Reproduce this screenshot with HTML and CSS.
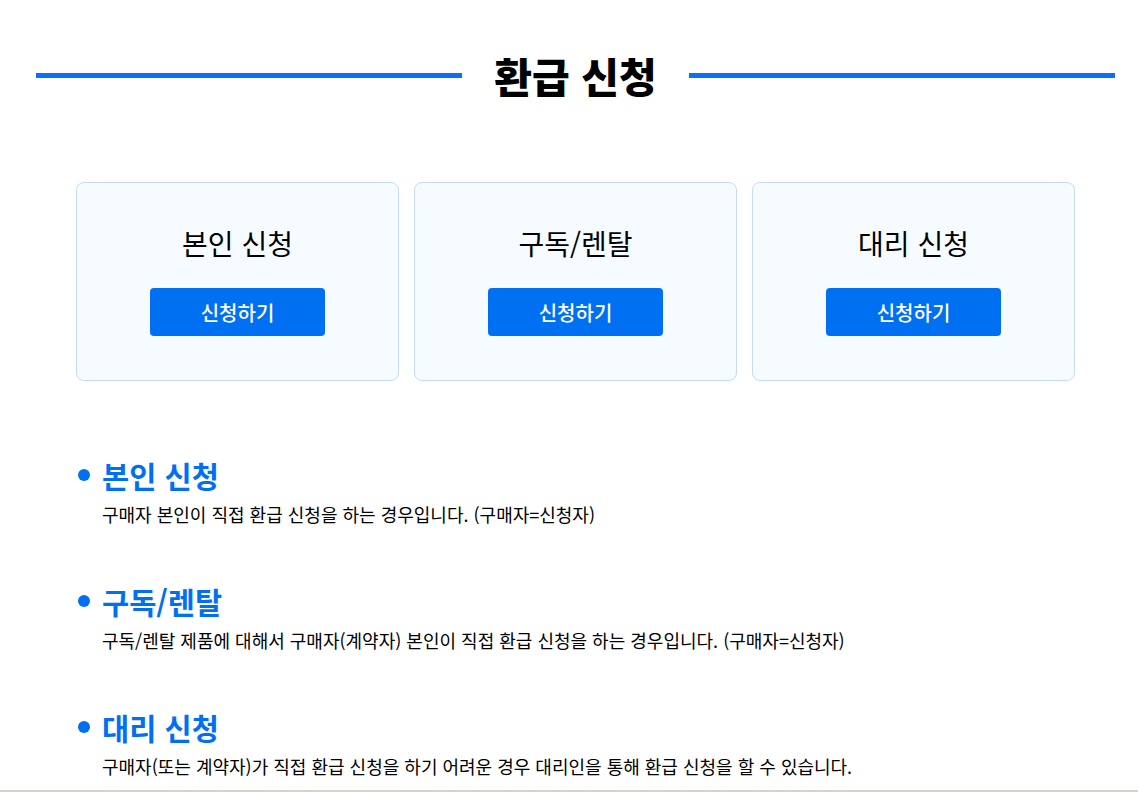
FILE: index.html
```html
<!DOCTYPE html>
<html lang="ko">
<head>
  <meta charset="UTF-8">
  <meta name="viewport" content="width=device-width, initial-scale=1.0">
  <title>환급 신청</title>
  <link rel="stylesheet" href="styles.css">
</head>
<body>
  <div class="page">
    <div class="page-title">
      <span class="title-line"></span>
      <h1>환급 신청</h1>
      <span class="title-line"></span>
    </div>

    <div class="cards">
      <div class="card">
        <h2>본인 신청</h2>
        <button>신청하기</button>
      </div>
      <div class="card">
        <h2>구독/렌탈</h2>
        <button>신청하기</button>
      </div>
      <div class="card">
        <h2>대리 신청</h2>
        <button>신청하기</button>
      </div>
    </div>

    <div class="guide">
      <div class="guide-item">
        <h3><span class="dot"></span>본인 신청</h3>
        <p>구매자 본인이 직접 환급 신청을 하는 경우입니다. (구매자=신청자)</p>
      </div>
      <div class="guide-item">
        <h3><span class="dot"></span>구독/렌탈</h3>
        <p>구독/렌탈 제품에 대해서 구매자(계약자) 본인이 직접 환급 신청을 하는 경우입니다. (구매자=신청자)</p>
      </div>
      <div class="guide-item">
        <h3><span class="dot"></span>대리 신청</h3>
        <p>구매자(또는 계약자)가 직접 환급 신청을 하기 어려운 경우 대리인을 통해 환급 신청을 할 수 있습니다.</p>
      </div>
    </div>
  </div>
  <div class="footer-line"></div>
</body>
</html>
```

FILE: styles.css
```css
body {
  margin: 0;
  font-family: "Noto Sans CJK KR", "Noto Sans", sans-serif;
  color: #000;
  background-color: #fff;
}
.page {
  padding: 47px 23px 0 36px;
}
.page-title {
  display: flex;
  align-items: center;
  gap: 32px;
  height: 56px;
}
.title-line {
  flex: 1;
  height: 5px;
  background-color: #0b6ffd;
}
h1 {
  margin: 0;
  font-size: 41px;
  font-weight: 900;
  line-height: 56px;
}
.cards {
  display: flex;
  gap: 15px;
  margin: 79px 40px 0;
}
.card {
  flex: 1;
  height: 199px;
  box-sizing: border-box;
  display: flex;
  flex-direction: column;
  align-items: center;
  padding-top: 41px;
  border: 1px solid #c4dcf8;
  border-radius: 8px;
  background-color: #f5fbff;
}
.card h2 {
  margin: 0;
  font-size: 28px;
  font-weight: 400;
  line-height: 38px;
}
button {
  width: 175px;
  height: 48px;
  margin-top: 26px;
  border: none;
  border-radius: 4px;
  background-color: #0070f3;
  color: #fff;
  font-family: inherit;
  font-size: 20px;
  font-weight: 500;
  cursor: pointer;
}
.guide {
  margin: 73px 40px 0;
}
.guide-item {
  margin-bottom: 53px;
}
.guide-item:last-child {
  margin-bottom: 0;
}
.guide-item h3 {
  display: flex;
  align-items: center;
  gap: 12px;
  margin: 0;
  font-size: 29.5px;
  font-weight: 700;
  line-height: 42px;
  color: #0070f3;
}
.dot {
  width: 12px;
  height: 12px;
  margin-left: 2px;
  border-radius: 50%;
  background-color: #0070f3;
}
.guide-item p {
  margin: 5px 0 0 26px;
  font-size: 18px;
  line-height: 26px;
}
.footer-line {
  margin-top: 11px;
  height: 2px;
  background-color: #d9d3cc;
}
```
